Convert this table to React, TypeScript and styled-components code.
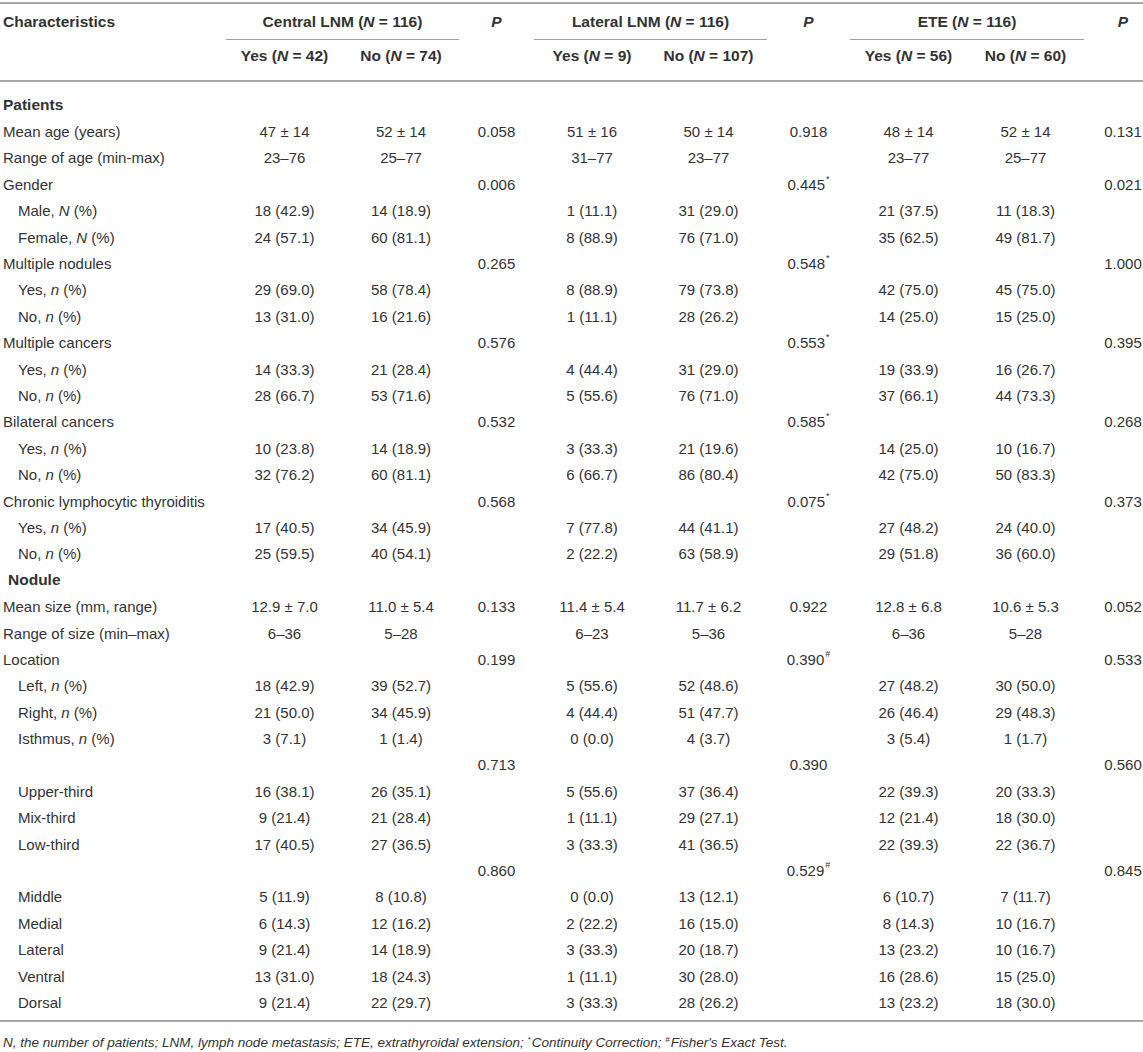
import React from "react";
import styled, { createGlobalStyle } from "styled-components";

const GlobalStyle = createGlobalStyle`
  html, body {
    margin: 0;
    padding: 0;
    background: #ffffff;
    overflow: hidden;
  }
  body {
    font-family: "Liberation Sans", Arial, Helvetica, sans-serif;
    color: #333333;
  }
`;

const COLS = "226px 117px 116px 75px 116px 117px 83px 117px 117px 78px";

const Page = styled.div`
  width: 1162px;
  padding-top: 2px;
`;

const Header = styled.div`
  display: grid;
  grid-template-columns: ${COLS};
  grid-template-rows: 36px 40px;
  border-top: 2px solid #a8a8a8;
  border-bottom: 2px solid #a8a8a8;
  font-weight: bold;
  font-size: 15.5px;
`;

const HeadCell = styled.div<{ $col: number; $row: number; $span?: number; $align?: string }>`
  grid-column: ${(p) => p.$col} / span ${(p) => p.$span ?? 1};
  grid-row: ${(p) => p.$row};
  display: flex;
  align-items: ${(p) => (p.$row === 1 ? "center" : "flex-start")};
  justify-content: ${(p) => p.$align ?? "center"};
  padding-left: ${(p) => (p.$align === "flex-start" ? "3px" : "0")};
  padding-top: ${(p) => (p.$row === 2 ? "7px" : "0")};
  white-space: nowrap;
`;

const GroupHead = styled(HeadCell)`
  border-bottom: 1px solid #a0a0a0;
`;

const Body = styled.div`
  padding-top: 10px;
  padding-bottom: 4px;
  border-bottom: 2px solid #a8a8a8;
`;

const Row = styled.div`
  display: grid;
  grid-template-columns: ${COLS};
  height: 26.4px;
  align-items: center;
  font-size: 15px;
`;

const Label = styled.div<{ $kind: "section" | "main" | "sub"; $indent?: number }>`
  padding-left: ${(p) => 3 + (p.$indent ?? 0)}px;
  font-weight: ${(p) => (p.$kind === "section" ? "bold" : "normal")};
  font-size: ${(p) => (p.$kind === "section" ? "15.5px" : "15px")};
  white-space: nowrap;
`;

const Cell = styled.div`
  text-align: center;
  white-space: nowrap;
`;

const Mark = styled.sup`
  font-size: 9px;
  vertical-align: top;
  position: relative;
  top: -2px;
  margin-left: 1px;
`;

const Footer = styled.div`
  padding: 11px 0 0 3px;
  font-size: 13.5px;
  font-style: italic;
  line-height: 19px;
  white-space: nowrap;
`;

const FootMark = styled.sup`
  font-size: 8px;
  vertical-align: top;
  position: relative;
  top: -3px;
  margin-right: 1px;
`;

type Kind = "section" | "main" | "sub";
type RowData = { label: React.ReactNode; kind: Kind; indent?: number; cells?: string[] };

const E = "";

const rows: RowData[] = [
  { label: "Patients", kind: "section" },
  { label: "Mean age (years)", kind: "main", cells: ["47 ± 14", "52 ± 14", "0.058", "51 ± 16", "50 ± 14", "0.918", "48 ± 14", "52 ± 14", "0.131"] },
  { label: "Range of age (min-max)", kind: "main", cells: ["23–76", "25–77", E, "31–77", "23–77", E, "23–77", "25–77", E] },
  { label: "Gender", kind: "main", cells: [E, E, "0.006", E, E, "0.445*", E, E, "0.021"] },
  { label: <>Male, <i>N</i> (%)</>, kind: "sub", cells: ["18 (42.9)", "14 (18.9)", E, "1 (11.1)", "31 (29.0)", E, "21 (37.5)", "11 (18.3)", E] },
  { label: <>Female, <i>N</i> (%)</>, kind: "sub", cells: ["24 (57.1)", "60 (81.1)", E, "8 (88.9)", "76 (71.0)", E, "35 (62.5)", "49 (81.7)", E] },
  { label: "Multiple nodules", kind: "main", cells: [E, E, "0.265", E, E, "0.548*", E, E, "1.000"] },
  { label: <>Yes, <i>n</i> (%)</>, kind: "sub", cells: ["29 (69.0)", "58 (78.4)", E, "8 (88.9)", "79 (73.8)", E, "42 (75.0)", "45 (75.0)", E] },
  { label: <>No, <i>n</i> (%)</>, kind: "sub", cells: ["13 (31.0)", "16 (21.6)", E, "1 (11.1)", "28 (26.2)", E, "14 (25.0)", "15 (25.0)", E] },
  { label: "Multiple cancers", kind: "main", cells: [E, E, "0.576", E, E, "0.553*", E, E, "0.395"] },
  { label: <>Yes, <i>n</i> (%)</>, kind: "sub", cells: ["14 (33.3)", "21 (28.4)", E, "4 (44.4)", "31 (29.0)", E, "19 (33.9)", "16 (26.7)", E] },
  { label: <>No, <i>n</i> (%)</>, kind: "sub", cells: ["28 (66.7)", "53 (71.6)", E, "5 (55.6)", "76 (71.0)", E, "37 (66.1)", "44 (73.3)", E] },
  { label: "Bilateral cancers", kind: "main", cells: [E, E, "0.532", E, E, "0.585*", E, E, "0.268"] },
  { label: <>Yes, <i>n</i> (%)</>, kind: "sub", cells: ["10 (23.8)", "14 (18.9)", E, "3 (33.3)", "21 (19.6)", E, "14 (25.0)", "10 (16.7)", E] },
  { label: <>No, <i>n</i> (%)</>, kind: "sub", cells: ["32 (76.2)", "60 (81.1)", E, "6 (66.7)", "86 (80.4)", E, "42 (75.0)", "50 (83.3)", E] },
  { label: "Chronic lymphocytic thyroiditis", kind: "main", cells: [E, E, "0.568", E, E, "0.075*", E, E, "0.373"] },
  { label: <>Yes, <i>n</i> (%)</>, kind: "sub", cells: ["17 (40.5)", "34 (45.9)", E, "7 (77.8)", "44 (41.1)", E, "27 (48.2)", "24 (40.0)", E] },
  { label: <>No, <i>n</i> (%)</>, kind: "sub", cells: ["25 (59.5)", "40 (54.1)", E, "2 (22.2)", "63 (58.9)", E, "29 (51.8)", "36 (60.0)", E] },
  { label: "Nodule", kind: "section", indent: 5 },
  { label: "Mean size (mm, range)", kind: "main", cells: ["12.9 ± 7.0", "11.0 ± 5.4", "0.133", "11.4 ± 5.4", "11.7 ± 6.2", "0.922", "12.8 ± 6.8", "10.6 ± 5.3", "0.052"] },
  { label: "Range of size (min–max)", kind: "main", cells: ["6–36", "5–28", E, "6–23", "5–36", E, "6–36", "5–28", E] },
  { label: "Location", kind: "main", cells: [E, E, "0.199", E, E, "0.390#", E, E, "0.533"] },
  { label: <>Left, <i>n</i> (%)</>, kind: "sub", cells: ["18 (42.9)", "39 (52.7)", E, "5 (55.6)", "52 (48.6)", E, "27 (48.2)", "30 (50.0)", E] },
  { label: <>Right, <i>n</i> (%)</>, kind: "sub", cells: ["21 (50.0)", "34 (45.9)", E, "4 (44.4)", "51 (47.7)", E, "26 (46.4)", "29 (48.3)", E] },
  { label: <>Isthmus, <i>n</i> (%)</>, kind: "sub", cells: ["3 (7.1)", "1 (1.4)", E, "0 (0.0)", "4 (3.7)", E, "3 (5.4)", "1 (1.7)", E] },
  { label: "", kind: "sub", cells: [E, E, "0.713", E, E, "0.390", E, E, "0.560"] },
  { label: "Upper-third", kind: "sub", cells: ["16 (38.1)", "26 (35.1)", E, "5 (55.6)", "37 (36.4)", E, "22 (39.3)", "20 (33.3)", E] },
  { label: "Mix-third", kind: "sub", cells: ["9 (21.4)", "21 (28.4)", E, "1 (11.1)", "29 (27.1)", E, "12 (21.4)", "18 (30.0)", E] },
  { label: "Low-third", kind: "sub", cells: ["17 (40.5)", "27 (36.5)", E, "3 (33.3)", "41 (36.5)", E, "22 (39.3)", "22 (36.7)", E] },
  { label: "", kind: "sub", cells: [E, E, "0.860", E, E, "0.529#", E, E, "0.845"] },
  { label: "Middle", kind: "sub", cells: ["5 (11.9)", "8 (10.8)", E, "0 (0.0)", "13 (12.1)", E, "6 (10.7)", "7 (11.7)", E] },
  { label: "Medial", kind: "sub", cells: ["6 (14.3)", "12 (16.2)", E, "2 (22.2)", "16 (15.0)", E, "8 (14.3)", "10 (16.7)", E] },
  { label: "Lateral", kind: "sub", cells: ["9 (21.4)", "14 (18.9)", E, "3 (33.3)", "20 (18.7)", E, "13 (23.2)", "10 (16.7)", E] },
  { label: "Ventral", kind: "sub", cells: ["13 (31.0)", "18 (24.3)", E, "1 (11.1)", "30 (28.0)", E, "16 (28.6)", "15 (25.0)", E] },
  { label: "Dorsal", kind: "sub", cells: ["9 (21.4)", "22 (29.7)", E, "3 (33.3)", "28 (26.2)", E, "13 (23.2)", "18 (30.0)", E] },
];

function renderValue(v: string) {
  const last = v.slice(-1);
  if (last === "*" || last === "#") {
    return (
      <>
        {v.slice(0, -1)}
        <Mark>{last}</Mark>
      </>
    );
  }
  return v;
}

const groups = [
  { title: "Central LNM", yes: "42", no: "74" },
  { title: "Lateral LNM", yes: "9", no: "107" },
  { title: "ETE", yes: "56", no: "60" },
];

const NItalic = styled.i`
  font-style: italic;
`;

export default function App() {
  return (
    <>
      <GlobalStyle />
      <Page>
        <Header>
          <HeadCell $col={1} $row={1} $align="flex-start">
            Characteristics
          </HeadCell>
          {groups.map((g, i) => {
            const base = 2 + i * 3;
            return (
              <React.Fragment key={g.title}>
                <GroupHead $col={base} $row={1} $span={2}>
                  {g.title}&nbsp;(<NItalic>N</NItalic>&nbsp;=&nbsp;116)
                </GroupHead>
                <HeadCell $col={base + 2} $row={1}>
                  <NItalic>P</NItalic>
                </HeadCell>
                <HeadCell $col={base} $row={2}>
                  Yes&nbsp;(<NItalic>N</NItalic>&nbsp;=&nbsp;{g.yes})
                </HeadCell>
                <HeadCell $col={base + 1} $row={2}>
                  No&nbsp;(<NItalic>N</NItalic>&nbsp;=&nbsp;{g.no})
                </HeadCell>
              </React.Fragment>
            );
          })}
        </Header>
        <Body>
          {rows.map((r, i) => (
            <Row key={i}>
              <Label $kind={r.kind} $indent={r.kind === "sub" ? 15 : r.indent ?? 0}>
                {r.label}
              </Label>
              {(r.cells ?? []).map((c, j) => (
                <Cell key={j}>{c ? renderValue(c) : null}</Cell>
              ))}
            </Row>
          ))}
        </Body>
        <Footer>
          N, the number of patients; LNM, lymph node metastasis; ETE, extrathyroidal extension;{" "}
          <FootMark>*</FootMark>Continuity Correction; <FootMark>#</FootMark>Fisher's Exact Test.
        </Footer>
      </Page>
    </>
  );
}
